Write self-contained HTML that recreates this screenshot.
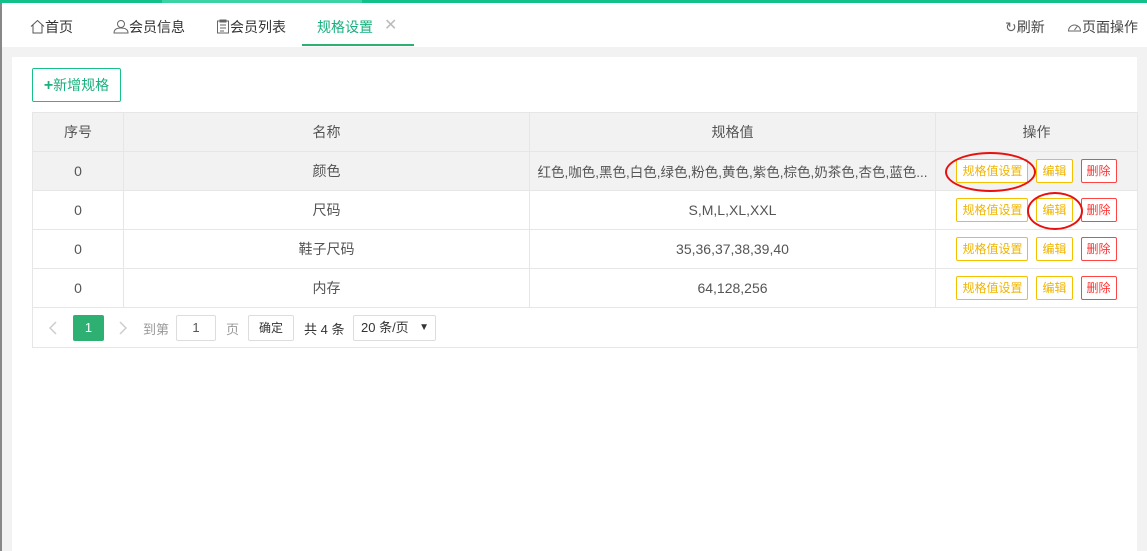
<!DOCTYPE html><html><head><meta charset="utf-8"><style>
*{margin:0;padding:0;box-sizing:border-box}
body{width:1147px;height:551px;overflow:hidden;background:#f2f2f2;font-family:"Liberation Sans","Noto Sans CJK SC",sans-serif;font-size:14px;color:#333;position:relative}
.top{position:absolute;left:0;top:0;width:1147px;height:3px;background:#13c08a}
.top i{position:absolute;left:162px;top:0;width:200px;height:3px;background:#3bd3a6}
.tabs{position:absolute;left:2px;top:3px;width:1145px;height:44px;background:#fff}
.tab{position:absolute;top:14px;font-size:14px;color:#333}
.lb{position:absolute;left:0;top:3px;width:2px;height:548px;background:#888}
.panel{position:absolute;left:12px;top:57px;width:1125px;height:494px;background:#fff}
.add{position:absolute;left:32px;top:68px;width:89px;height:34px;border:1px solid #19c08a;border-radius:2px;color:#19b07e;font-size:14px;line-height:32px;text-align:center}
table{position:absolute;left:32px;top:112px;width:1106px;border-collapse:collapse}
td{border:1px solid #e6e6e6;height:39px;text-align:center;font-size:14px;color:#555}
tr.h td{background:#f2f2f2}
tr.g td{background:#f2f2f2}
.b{display:inline-block;height:24px;line-height:22px;border:1px solid #f5c000;color:#f0b400;font-size:12px;padding:0 5px;border-radius:2px;margin:0 4px;background:#fff}
.r{border-color:#f44;color:#f33}
.pg{position:absolute;left:32px;top:307px;width:1106px;height:41px;border:1px solid #e6e6e6;border-top:none;font-size:13px;color:#666}
.pg span{position:absolute}
.ring{position:absolute;border:2.5px solid #e8100e;border-radius:50%}
</style></head><body>
<div class="top"><i></i></div>
<div class="tabs">
<span class="tab" style="left:28px"><svg width="15" height="15" viewBox="0 0 15 15" style="vertical-align:-2px"><path d="M1 7.5L7.5 1.5 14 7.5M3 6v8h9V6" fill="none" stroke="#555"/></svg>首页</span>
<span class="tab" style="left:111px"><svg width="16" height="15" viewBox="0 0 16 15" style="vertical-align:-2px"><circle cx="8" cy="5" r="3.5" fill="none" stroke="#666"/><path d="M1 14c0-4 3-5 7-5s7 1 7 5z" fill="none" stroke="#666"/></svg>会员信息</span>
<span class="tab" style="left:214px"><svg width="14" height="15" viewBox="0 0 14 15" style="vertical-align:-2px"><rect x="1.5" y="2" width="11" height="12" fill="none" stroke="#666"/><path d="M4 1h6v2H4zM4 6h6M4 9h6M4 12h4" stroke="#666" fill="none"/></svg>会员列表</span>
<span class="tab" style="left:315px;color:#19b07e">规格设置</span>
<span class="tab" style="left:382px;color:#bbb;font-size:16px;top:12px">✕</span>
<div style="position:absolute;left:300px;top:41px;width:112px;height:2px;background:#2eb072"></div>
<span class="tab" style="left:1003px;color:#444"><span style="color:#666">↻</span>刷新</span>
<span class="tab" style="left:1065px;color:#444"><svg width="15" height="13" viewBox="0 0 15 13" style="vertical-align:-1px"><path d="M1.5 11a6 6 0 1 1 12 0z" fill="none" stroke="#666"/><path d="M7.5 10l3-4" stroke="#666"/></svg>页面操作</span>
</div>
<div class="lb"></div>
<div class="panel"></div>
<div class="add"><b style="font-size:16px">+</b>新增规格</div>
<table>
<tr class="h"><td style="width:91px">序号</td><td style="width:406px">名称</td><td style="width:406px">规格值</td><td>操作</td></tr>
<tr class="g"><td>0</td><td>颜色</td><td style="font-size:13.5px">红色,咖色,黑色,白色,绿色,粉色,黄色,紫色,棕色,奶茶色,杏色,蓝色...</td><td><span class="b">规格值设置</span><span class="b">编辑</span><span class="b r">删除</span></td></tr>
<tr><td>0</td><td>尺码</td><td>S,M,L,XL,XXL</td><td><span class="b">规格值设置</span><span class="b">编辑</span><span class="b r">删除</span></td></tr>
<tr><td>0</td><td>鞋子尺码</td><td>35,36,37,38,39,40</td><td><span class="b">规格值设置</span><span class="b">编辑</span><span class="b r">删除</span></td></tr>
<tr><td>0</td><td>内存</td><td>64,128,256</td><td><span class="b">规格值设置</span><span class="b">编辑</span><span class="b r">删除</span></td></tr>
</table>
<div class="pg">
<svg style="position:absolute;left:16px;top:14px" width="8" height="14" viewBox="0 0 8 14"><path d="M7 1L1 7l6 6" fill="none" stroke="#ccc" stroke-width="1.5"/></svg>
<span style="left:40px;top:8px;width:31px;height:26px;background:#2eb072;color:#fff;text-align:center;line-height:26px;border-radius:2px">1</span>
<svg style="position:absolute;left:86px;top:14px" width="8" height="14" viewBox="0 0 8 14"><path d="M1 1l6 6-6 6" fill="none" stroke="#ccc" stroke-width="1.5"/></svg>
<span style="left:110px;top:12px;color:#999">到第</span>
<span style="left:143px;top:8px;width:40px;height:26px;border:1px solid #ddd;text-align:center;line-height:24px;color:#555;border-radius:2px">1</span>
<span style="left:193px;top:12px;color:#999">页</span>
<span style="left:215px;top:8px;width:46px;height:26px;border:1px solid #ddd;text-align:center;line-height:24px;color:#333;font-size:12px;border-radius:2px">确定</span>
<span style="left:271px;top:12px;color:#333">共 4 条</span>
<span style="left:320px;top:8px;width:83px;height:26px;border:1px solid #ddd;line-height:24px;color:#333;padding-left:7px;border-radius:2px">20 条/页<b style="position:absolute;right:6px;font-size:10px">▼</b></span>
</div>
<div class="ring" style="left:945px;top:152px;width:91px;height:40px"></div>
<div class="ring" style="left:1027px;top:192px;width:56px;height:38px"></div>
</body></html>
